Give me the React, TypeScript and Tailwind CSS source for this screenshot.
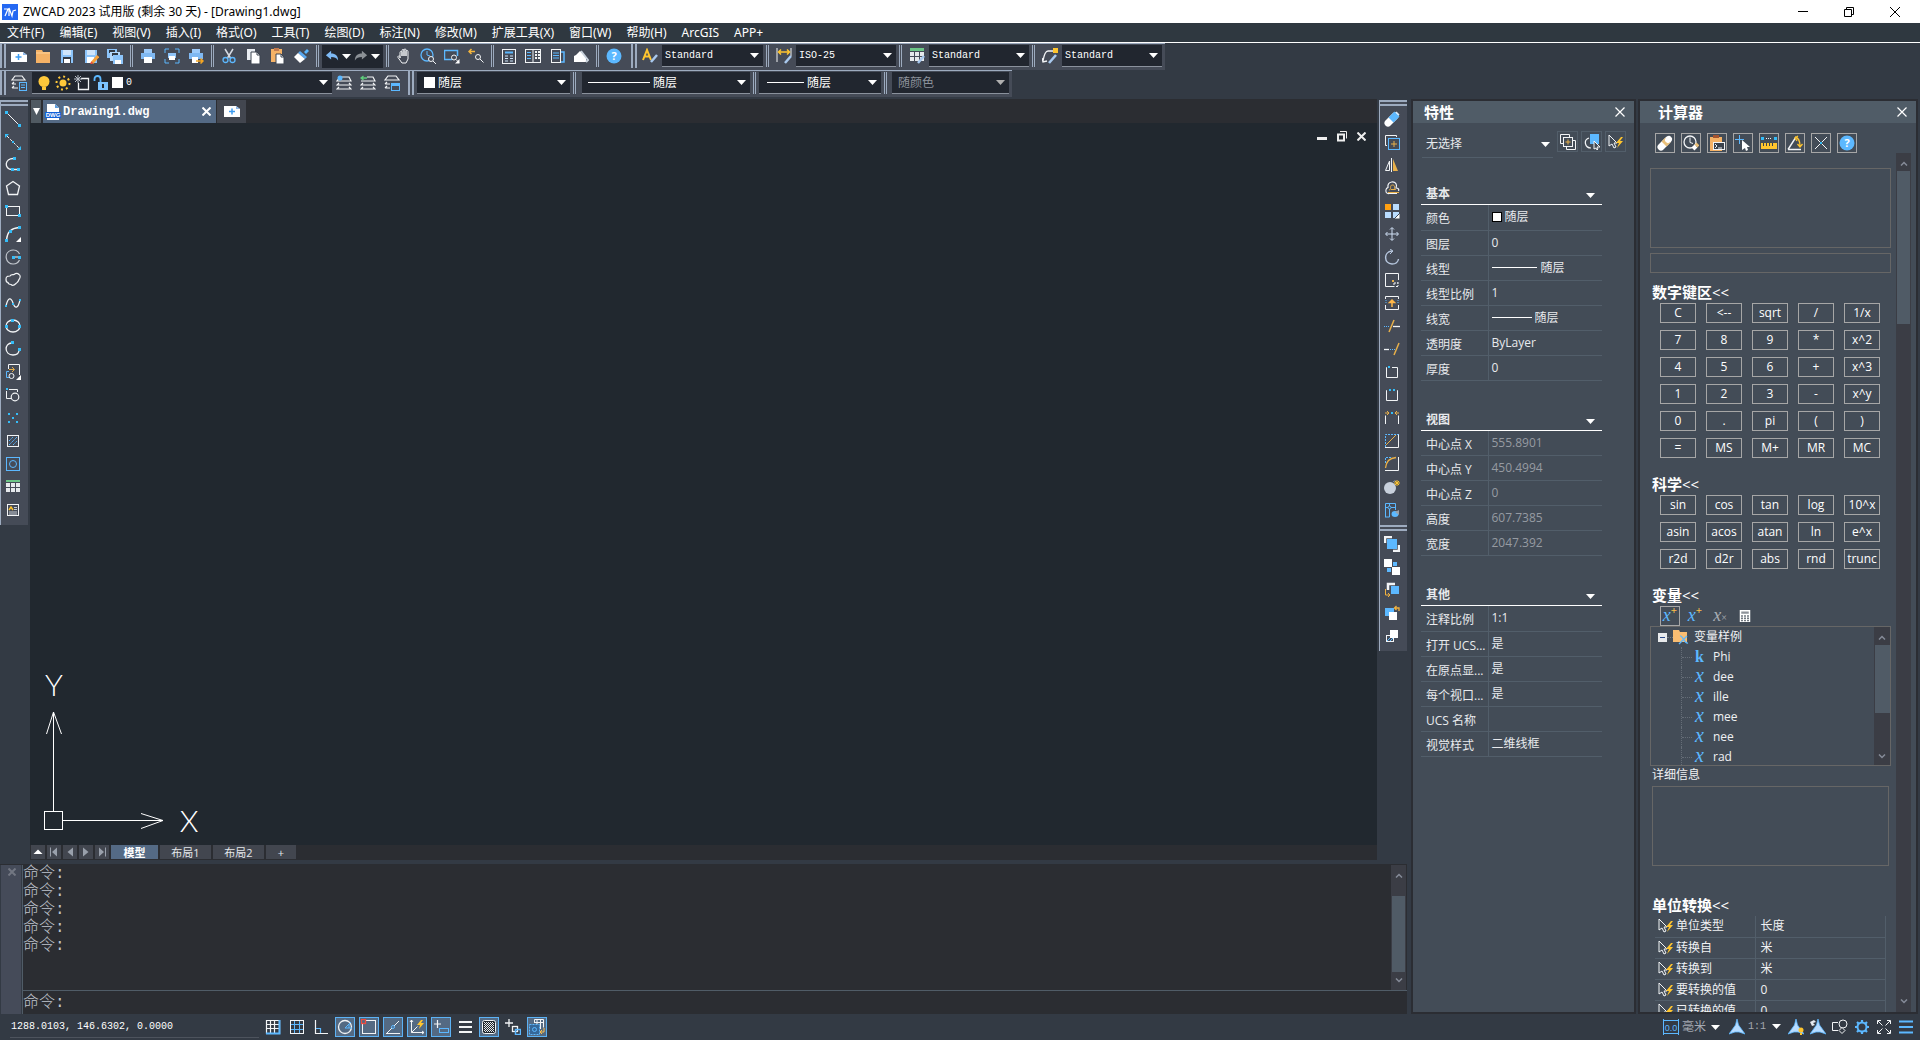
import React from 'react';

const BLUE = '#5cb8ff';
const GOLD = '#e8b04a';

interface IcoProps {
  children: React.ReactNode;
  size?: number;
}

// 16-unit drawing grid shared by every toolbar glyph
const Ico = ({ children, size = 16 }: IcoProps) => (
  <svg width={size} height={size} viewBox="0 0 16 16" fill="none" stroke="#f2f4f6" strokeWidth="1" className="shrink-0" aria-hidden="true">
    {children}
  </svg>
);

// small grip square used on drawing tool glyphs
const Grip = ({ x, y, s = 3 }: { x: number; y: number; s?: number }) => (
  <rect x={x} y={y} width={s} height={s} fill="#35bdf8" stroke="none" />
);

const Box = ({ x, y, w, h, f = '#ffffff' }: { x: number; y: number; w: number; h: number; f?: string }) => (
  <rect x={x} y={y} width={w} height={h} fill={f} stroke="none" />
);

const Caret = ({ color = '#ffffff' }: { color?: string }) => (
  <svg width="9" height="5" viewBox="0 0 9 5" className="shrink-0" aria-hidden="true"><path d="M0 0h9L4.500 5z" fill={color} /></svg>
);

const CloseX = ({ size = 10 }: { size?: number }) => (
  <svg width={size} height={size} viewBox="0 0 10 10" stroke="#ffffff" strokeWidth="1.2" aria-hidden="true"><path d="M0.500 0.500l9 9M9.500 0.500l-9 9" /></svg>
);

const Chevron = ({ down = false }: { down?: boolean }) => (
  <svg width="8" height="5" viewBox="0 0 8 5" fill="none" stroke="#858b98" strokeWidth="1.500" aria-hidden="true">
    <path d={down ? 'M1 0.500l3 3 3-3' : 'M1 4.500l3-3 3 3'} />
  </svg>
);

const helpIcon = (
  <g stroke="none">
    <circle cx="8" cy="8" r="7.5" fill={BLUE} />
    <text x="8" y="12" textAnchor="middle" fontSize="11" fontWeight="700" fill="#fff" fontFamily="Open Sans">?</text>
  </g>
);

const pickIcon = (
  <g>
    <path d="M1 1v11l3-2 2 4 2-1-2-4h3z" />
    <path d="M13 3l-5 6h3l-2 5 6-7h-3l3-4z" fill="#ffc52e" stroke="none" />
  </g>
);

const fileIcons: [string, React.ReactNode][] = [
  ['新建', <><path d="M0 4h12l4 3v7H0z" fill="#fff" stroke="none" /><path d="M12 4l4 3h-4z" fill="#8fb8e8" stroke="none" /><path d="M7.500 6v6M4.500 9h6" stroke="#3c9bf0" strokeWidth="1.500" /></>],
  ['打开', <><path d="M1 2h6l1 2h7v11H1z" fill="#f5b266" stroke="none" /><path d="M1 5h14" stroke="#ffd49c" /></>],
  ['保存', <><path d="M2 2h12v13H2z" fill="#8cc4fa" stroke="none" /><Box x={4} y={2} w={8} h={5} f="#cfe5fb" /><Box x={4} y={9} w={8} h={6} f="#333a45" /><Box x={5} y={11} w={6} h={4} f="#fff" /></>],
  ['另存为', <><path d="M2 2h12v13H2z" fill="#8cc4fa" stroke="none" /><Box x={4} y={2} w={8} h={5} f="#cfe5fb" /><Box x={4} y={9} w={7} h={6} f="#fff" /><path d="M9 15l6-7" stroke="#f7a13a" strokeWidth="3" /><path d="M8 16l1-2" stroke="#e84c3d" strokeWidth="2" /></>],
  ['全部保存', <><Box x={0} y={1} w={10} h={9} f="#8cc4fa" /><Box x={2} y={2} w={6} h={3} f="#333a45" /><Box x={3} y={4} w={10} h={9} f="#b4d8fb" /><Box x={5} y={5} w={6} h={3} f="#333a45" /><Box x={6} y={7} w={10} h={9} f="#8cc4fa" /><Box x={8} y={12} w={6} h={4} f="#fff" /></>],
];

const printIcons: [string, React.ReactNode][] = [
  ['打印', <><Box x={4} y={1} w={8} h={4} f="#9ccafa" /><Box x={1} y={5} w={14} h={6} f="#7fb8f2" /><Box x={4} y={9} w={8} h={6} f="#fff" /></>],
  ['打印预览', <><path d="M1 5V1h4M11 1h4v4M15 11v4h-4M5 15H1v-4" stroke={BLUE} /><Box x={4} y={5} w={8} h={5} f="#8fc4f8" /><Box x={5} y={8} w={6} h={4} f="#fff" /></>],
  ['发布', <><Box x={4} y={1} w={8} h={4} f="#9ccafa" /><Box x={1} y={5} w={14} h={6} f="#7fb8f2" /><Box x={4} y={9} w={6} h={6} f="#fff" /><path d="M8 13h7M12.500 10.500L15 13l-2.500 2.500" stroke="#f5a623" strokeWidth="1.500" /></>],
];

const editIcons: [string, React.ReactNode][] = [
  ['剪切', <><path d="M4 1l5.500 9M12 1L6.500 10" stroke="#d5dbe3" strokeWidth="1.500" /><circle cx="4.500" cy="12" r="2.500" stroke={BLUE} strokeWidth="1.300" /><circle cx="11.500" cy="12" r="2.500" stroke={BLUE} strokeWidth="1.300" /></>],
  ['复制', <><Box x={2} y={1} w={8} h={11} f="#e9edf2" /><path d="M6 4h6l3 3v9H6z" fill="#fff" stroke="#3d4450" /><path d="M12 4v3h3" stroke="#3d4450" /></>],
  ['粘贴', <><Box x={2} y={1} w={11} h={13} f="#f5b266" /><Box x={5} y={0} w={5} h={3} f="#c27b4f" /><path d="M7 6h5l3 3v7H7z" fill="#fff" stroke="#3d4450" /><path d="M12 6v3h3" stroke="#3d4450" /></>],
  ['特性匹配', <><path d="M11 4l3-3 2 2-3 3z" fill={BLUE} stroke="none" /><path d="M7 3l7 6-2 2-7-6z" fill="#5aa8ef" stroke="none" /><path d="M5 5l7 6-5 4-6-6z" fill="#fff" stroke="none" /></>],
];

const viewIcons: [string, React.ReactNode][] = [
  ['平移', <path d="M4 10V4.500a1 1 0 012 0V8V2.500a1 1 0 012 0V8V2a1 1 0 012 0v6V3.500a1 1 0 012 0V11l-2 4H6l-4-5.500a1 1 0 012-1z" />],
  ['实时缩放', <><circle cx="7" cy="7" r="6" stroke={BLUE} strokeWidth="1.300" /><path d="M7 3v4l3 1" stroke={BLUE} /><circle cx="11" cy="11" r="2.500" fill="#454b57" /><path d="M13 13l3 3" /></>],
  ['窗口缩放', <><path d="M13.500 8V2.500h-13v9H8" stroke={BLUE} strokeWidth="1.500" /><circle cx="10" cy="9.500" r="2.500" fill="#454b57" /><path d="M12 11.500l3 3" /><path d="M15.500 11v4.500h-4.500z" fill="#fff" stroke="none" /></>],
  ['上一个', <><path d="M7 3.500H1.500M3.500 1L1 3.500 3.500 6" stroke="#f5b63d" strokeWidth="1.500" /><circle cx="10" cy="9" r="2.500" /><path d="M12 11l3.500 3.500" /></>],
];

const paletteIcons: [string, React.ReactNode][] = [
  ['特性', <><rect x="1.500" y="1.500" width="13" height="14" /><path d="M4 4.500h8" stroke={BLUE} strokeWidth="2" /><path d="M4 8h3M4 10.500h3M4 13h3M9 8h3M9 10.500h3M9 13h3" stroke="#cfe5fb" /></>],
  ['设计中心', <><rect x="0.500" y="1.500" width="15" height="13" /><path d="M8 1v14" /><path d="M2 4.500h4M2 7.500h4M2 10.500h4" stroke={BLUE} /><path d="M10 4h2M13 4h2M10 7h2M13 7h2M10 10h2M13 10h2" strokeWidth="2" /></>],
  ['工具选项板', <><rect x="2.500" y="1.500" width="9" height="13" /><path d="M12 4h3v10h-3" stroke={BLUE} strokeWidth="1.500" /><path d="M4 5h6M4 7.500h6M4 10h6" stroke={BLUE} /></>],
  ['清理', <><path d="M1 8l2-1 4-4 6 6v5H1z" fill="#fff" stroke="none" /><path d="M8 3l7 9-2 2" stroke="#c9d2dc" strokeWidth="2" /></>],
];

const drawIcons: [string, React.ReactNode][] = [
  ['直线', <><path d="M2 2l12 12" /><Grip x={0} y={0} /><Grip x={13} y={13} /></>],
  ['构造线', <><path d="M2 2l12 12" strokeDasharray="3 1.500" /><Grip x={7} y={7} s={2} /><path d="M0 0h4l-4 4zM16 16h-4l4-4z" fill="#35bdf8" stroke="none" /></>],
  ['多段线', <><path d="M9 1.500C-1 1-1 12.500 7 12.500h6" strokeWidth="1.300" /><Grip x={8} y={0} /><Grip x={6} y={11} /><Grip x={12} y={11} /></>],
  ['正多边形', <path d="M8 1.500L14.500 6 12.500 14.500h-9L1.500 6z" strokeWidth="1.300" />],
  ['矩形', <><rect x="1.500" y="3.500" width="13" height="9" /><Grip x={0} y={2} /><Grip x={13} y={11} /></>],
  ['圆弧', <><path d="M1.500 14C2 6 7 2 14 1.500" strokeWidth="1.300" /><Grip x={0} y={13} /><Grip x={4} y={4} /><Grip x={13} y={0} /><path d="M16 11v5h-5z" fill="#fff" stroke="none" /></>],
  ['圆', <><path d="M14.500 5A7 7 0 108 15a7 7 0 006.500-4" stroke="#c3c8cf" strokeWidth="1.200" /><path d="M8 8h6" /><Grip x={7} y={7} /><Grip x={13} y={7} /></>],
  ['修订云线', <path d="M1 7c0-3 3-3 4-3 1-2 3-1 4-1.500 2-1.500 4-1 5 0 2 1 1 4 0 5-1 3-2 3-3 4-2 2-4 2-5 1-2 0-3-1-3-2-2 0-2-2-2-3.500z" strokeWidth="1.200" />],
  ['样条曲线', <><path d="M1 11C3 2 6 2 8 8s5 6 7-3" strokeWidth="1.200" /><Grip x={0} y={10} s={2} /><Grip x={7} y={8} s={2} /><Grip x={14} y={4} s={2} /></>],
  ['椭圆', <><ellipse cx="8" cy="8" rx="7" ry="6" strokeWidth="1.300" /><Grip x={0} y={7} /><Grip x={6} y={1} /><Grip x={13} y={7} /></>],
  ['椭圆弧', <><path d="M7 2C-1 2-1 14 8 14c4 0 6-2 6-5" strokeWidth="1.300" /><Grip x={6} y={0} /><Grip x={13} y={7} /></>],
  ['插入块', <><path d="M3.500 5V0.500h11V11" /><path d="M4 7.500H1.500v6H5" stroke={BLUE} /><path d="M4 5.500h5M7 3l2.500 2.500L7 8" stroke={GOLD} /><circle cx="6.500" cy="12" r="2.500" /><path d="M16 11v5h-5z" fill="#fff" stroke="none" /></>],
  ['创建块', <><path d="M4 2.500h8.500V5M1.500 4v7.500H6" /><circle cx="10" cy="10" r="3.800" strokeWidth="1.200" /><Grip x={1} y={1} s={2} /></>],
  ['点', <><Grip x={3} y={3} s={2} /><Grip x={11} y={3} s={2} /><Grip x={7} y={7} s={2} /><Grip x={3} y={11} s={2} /><Grip x={11} y={11} s={2} /></>],
  ['图案填充', <><rect x="2.500" y="2.500" width="11" height="11" /><path d="M4 8l4-4M4 12l8-8M8 12l4-4" stroke={BLUE} strokeDasharray="1.500 0.500" /></>],
  ['面域', <><rect x="1.500" y="1.500" width="13" height="13" stroke={BLUE} /><circle cx="8" cy="8" r="3.500" stroke={BLUE} /></>],
  ['表格', <><Box x={1} y={1} w={14} h={2} f="#6cc587" />{[4, 9].map(y => [1, 6, 11].map(x => <Box key={`${x}-${y}`} x={x} y={y} w={4} h={4} f="#e6e9ec" />))}</>],
  ['多行文字', <><rect x="2.500" y="2.500" width="11" height="11" /><path d="M4 8l2-3 2 3" stroke="#ffc52e" strokeWidth="1.500" /><path d="M9 5.500h3M9 7.500h3M4 10h8M4 12h8" stroke="#c8ced6" /></>],
];

const modifyIcons: [string, React.ReactNode][] = [
  ['删除', <><path d="M4 12l7-7" stroke="#fff" strokeWidth="7" strokeLinecap="round" /><path d="M7 9l6-6" stroke={BLUE} strokeWidth="7" /><path d="M12 1l3 3" stroke="#d8e9f9" strokeWidth="1.500" /></>],
  ['复制', <><path d="M3 11.500H1.500v-10h11V3" /><rect x="4.500" y="4.500" width="11" height="11" stroke={BLUE} /><path d="M10 7v6M7 10h6" stroke={GOLD} /></>],
  ['镜像', <><path d="M7.500 1v14" /><path d="M5.500 4v9.500H1.500z" /><path d="M9 2v12h5z" fill={GOLD} stroke="none" /></>],
  ['偏移', <><path d="M13 13.500H5C2 14 1 11 2.500 8.500L4 7.500C3 1 12 0 12.500 5.500L12 8c3 0 3 2 2.500 3" strokeWidth="1.200" /><path d="M4 12.500h11M5 10c3 0 0-5 3.500-5s1 4 3 4.500H7" stroke={GOLD} /></>],
  ['阵列', <><Box x={1} y={1} w={6} h={6} f="#ffa012" /><Box x={9} y={1} w={6} h={6} f="#b9dcff" /><Box x={1} y={9} w={6} h={6} f="#b9dcff" /><Box x={9} y={9} w={6} h={6} f="#b9dcff" /><path d="M16 10v6h-6z" fill="#fff" stroke="#434a56" /></>],
  ['移动', <path d="M8 2v12M2 8h12M6 3.500l2-2 2 2M6 12.500l2 2 2-2M3.500 6l-2 2 2 2M12.500 6l2 2-2 2" stroke="#d0e0f5" />],
  ['旋转', <><path d="M8 2C-1 3 0 15 8 15c4 0 6-2 6.500-5" stroke="#b7c7de" strokeWidth="1.400" /><path d="M6 0l3 2-3 3" stroke="#b7c7de" /></>],
  ['缩放', <><path d="M10 14.500H1.500v-13h13V8" /><path d="M10 11h4M10 11v4M14 14.500h-2M14 10v4" strokeDasharray="2 1" /><Box x={8} y={8} w={2} h={2} f={GOLD} /></>],
  ['拉伸', <><path d="M5 1.500H1.500V4M5 1.500h9.500V4M1.500 10v4.500h13V10" /><path d="M2 5v4M14 5v4" stroke={BLUE} strokeDasharray="1 1" /><path d="M8 12V5M5.500 7.500L8 5l2.500 2.500z" stroke="#ffb84a" fill="#ffb84a" strokeWidth="1.500" /></>],
  ['修剪', <><path d="M0 8.500h6" stroke={BLUE} strokeDasharray="1 1" /><path d="M9 8.500h7" strokeWidth="1.300" /><path d="M5 14l5-12" stroke={GOLD} strokeWidth="1.500" /></>],
  ['延伸', <><path d="M0 8.500h5" strokeWidth="1.300" /><path d="M6 8.500h5" stroke={BLUE} strokeDasharray="1 1" /><path d="M10 14l5-12" stroke={GOLD} strokeWidth="1.500" /></>],
  ['打断于点', <><path d="M3 3.500H2.500v10h11v-10H8" /><Grip x={4} y={2} s={2} /></>],
  ['打断', <><path d="M3 3.500H2.500v10h11v-10H13" /><Grip x={5} y={2} s={2} /><Grip x={9} y={2} s={2} /></>],
  ['合并', <><path d="M1.500 14V5.500M14.500 14V5.500" /><path d="M1 3h4M3 1l2 2-2 2M15 3h-4M13 1l-2 2 2 2" stroke={GOLD} /><Grip x={7} y={2} s={2} /></>],
  ['倒角', <><path d="M14.500 1v13.500H1" /><path d="M1.500 14V1.500h13" stroke={BLUE} strokeDasharray="2 1" /><path d="M2 12L12 2" stroke={GOLD} /></>],
  ['圆角', <><path d="M14.500 1v13.500H1" /><path d="M1.500 7V1.500H7" stroke={BLUE} strokeDasharray="2 1" /><path d="M1.500 12C2 6 6 2 12 1.500" stroke={GOLD} strokeWidth="1.300" /></>],
  ['分解', <><circle cx="6" cy="9" r="6" fill="#c8d0dc" stroke="none" /><path d="M9 3c2-2 3-1 4 1" stroke="#9aa3b0" /><path d="M13 1v6M10 4h6M11 2l4 4M15 2l-4 4" stroke="#ffc52e" /></>],
  ['编辑块', <><path d="M1.500 15V1.500h10V8M1 5.500h11M5.500 1v14H1" stroke={BLUE} /><circle cx="5.500" cy="5.500" r="1.500" stroke={BLUE} fill="#454b57" /><ellipse cx="11" cy="12" rx="3.500" ry="3" fill={BLUE} stroke="none" /><path d="M11 10l4-2v5z" fill="#9aa0a8" stroke="none" /></>],
];

const orderIcons: [string, React.ReactNode][] = [
  ['前置', <><path d="M1 7V1h7M15 9v6H9" strokeWidth="2.500" /><Box x={3} y={3} w={10} h={10} f={BLUE} /></>],
  ['后置', <><Box x={0} y={0} w={8} h={8} /><Box x={8} y={8} w={8} h={8} /><Box x={9} y={3} w={4} h={4} f={BLUE} /><Box x={3} y={9} w={4} h={4} f={BLUE} /></>],
  ['置于对象之上', <><path d="M4 8V2h7" strokeWidth="2.500" /><Box x={7} y={4} w={8} h={8} f={BLUE} /><path d="M1.500 7v6h4M4 11l2 2-2 2" stroke="#f0b13f" /></>],
  ['置于对象之下', <><Box x={1} y={3} w={9} h={8} f={BLUE} /><Box x={5} y={7} w={8} h={8} /><path d="M15 6V3h-4M12.500 1l-2 2 2 2" stroke="#f0b13f" strokeWidth="1.300" /></>],
  ['图案填充后置', <><rect x="2.500" y="7.500" width="7" height="6" /><path d="M3 13l5-5M6 13l3-3" stroke={BLUE} /><Box x={6} y={2} w={8} h={8} /></>],
];

const calcTools: [string, React.ReactNode][] = [
  ['清除', <><path d="M4 12l7-7" stroke="#fff" strokeWidth="7" strokeLinecap="round" /><path d="M7 9l4-4" stroke="#eac07a" strokeWidth="7" /><path d="M11 5l1-1" stroke="#fff" strokeWidth="6" strokeLinecap="round" /></>],
  ['清除历史', <><circle cx="7" cy="7" r="6" strokeWidth="1.300" /><path d="M7 2.500v5l3 1" /><path d="M10 14l3-3" stroke="#fff" strokeWidth="4" /><path d="M13 11l2-2" stroke="#eac07a" strokeWidth="4" /></>],
  ['粘贴到命令行', <><Box x={1} y={2} w={12} h={14} f="#f5b266" /><Box x={4} y={0} w={6} h={3} f="#a5542f" /><rect x="4.500" y="7.500" width="11" height="7" fill="#3a424d" /><path d="M6 9l2 2-2 2M9 13h4" /></>],
  ['获取坐标', <><path d="M4.500 0v9M0 4.500h9" stroke={BLUE} /><path d="M7 5l8 7-3 0 1 3-2 1-1-3-3 2z" fill="#fff" stroke="none" /></>],
  ['两点距离', <><Grip x={0} y={2} /><Grip x={13} y={2} /><path d="M5 3.500h6" strokeDasharray="1 1" /><Box x={0} y={8} w={16} h={6} f="#ffc52e" /><path d="M2.500 8v3M5.500 8v3M8.500 8v3M11.500 8v3" stroke="#3a424d" /></>],
  ['角度', <><path d="M1 14.500L9 2M1 14.500h13" strokeWidth="1.400" /><path d="M8 2c4 1 5 4 5 9M10.500 9l2.500 3 2.500-3M11 1L8 3l2 3" stroke="#ffc52e" strokeWidth="1.300" /></>],
  ['交点', <><path d="M2 2l12 12M14 2L2 14" /><Grip x={7} y={7} s={2} /></>],
  ['帮助', helpIcon],
];

const scaleMark = <path d="M8 0l1.500 6L16 15l-6-2H6l-6 2 6.500-9z" fill="#b8dcff" stroke={BLUE} strokeWidth="0.800" />;

const statusTools: [string, boolean, React.ReactNode][] = [
  ['捕捉', false, <><path d="M1.500 1.500h13v13h-13zM1 5.500h13M1 9.500h13M5.500 1v13M9.500 1v13" strokeWidth="1.200" /><path d="M14.500 1v13.500H1" stroke={BLUE} strokeWidth="2" /></>],
  ['栅格', false, <><path d="M1 5.500h14M1 10.500h14M5.500 1v14M10.500 1v14" stroke={BLUE} /><rect x="1.500" y="1.500" width="13" height="13" /></>],
  ['正交', false, <><path d="M2.500 1v13.500H15" strokeWidth="1.200" /><path d="M3 9.500h4.500V14" stroke={BLUE} strokeWidth="1.200" /></>],
  ['极轴', true, <><circle cx="8" cy="8" r="6.500" strokeWidth="1.300" /><path d="M8 9l6-6M8 9h7M12 5v4" stroke={BLUE} /></>],
  ['对象捕捉', true, <><rect x="1.500" y="1.500" width="13" height="13" /><rect x="0.500" y="0.500" width="4" height="4" stroke="#f04a3e" strokeWidth="1.300" fill="#546a83" /></>],
  ['对象追踪', true, <><path d="M1 14.500h14M2 14L14 2" /><circle cx="8" cy="8" r="1.500" stroke={BLUE} fill="#546a83" /></>],
  ['动态 UCS', true, <><path d="M2.500 1v12.500H15M2.500 13.500l6-6M1 3l1.500-2L4 3M13 12l2 1.500-2 1.500" /><path d="M12 1L8 6h3l-1 4 5-6h-3l2-3z" fill="#ffc52e" stroke="none" /></>],
  ['动态输入', true, <><path d="M4.500 1v8M1 5h7" strokeWidth="1.200" /><rect x="6.500" y="9.500" width="9" height="4" stroke={BLUE} /></>],
  ['线宽', false, <path d="M2 3h13M2 8h13M2 13h13" strokeWidth="2.200" />],
  ['透明度', true, <><rect x="1.500" y="1.500" width="13" height="13" rx="2" fill="#22282f" />{[3, 5, 7, 9, 11].map(y => <path key={y} d={`M3 ${y + 0.5}h10M4 ${y + 1.5}h9`} strokeDasharray="1 1" stroke="#e8eaec" />)}</>],
  ['选择循环', false, <><path d="M4 0v8M0 4h8" strokeWidth="1.300" /><rect x="7.500" y="7.500" width="5" height="5" strokeWidth="1.300" /><rect x="10.500" y="10.500" width="5" height="5" stroke={BLUE} strokeWidth="1.500" /></>],
  ['快捷特性', true, <><path d="M5.500 4V0.500h9v8M8 1v4M11.500 1v9M5 3.500h10" /><rect x="0.500" y="5.500" width="10" height="10" stroke={BLUE} strokeDasharray="2 1" fill="#36689a" /><circle cx="5.500" cy="10.500" r="2" stroke={BLUE} /><path d="M15 9v4h-4M13 11l-2 2 2 2" stroke="#ffc04a" /></>],
];

const statusRight: [string, React.ReactNode][] = [
  ['注释可见性', <>{scaleMark}<circle cx="13" cy="11" r="2.500" fill="#ffc52e" stroke="none" /><Box x={12} y={14} w={2} h={2} f="#ffc52e" /></>],
  ['自动缩放', <>{scaleMark}<path d="M0 3l4-2 2 2-3 1 2 2-3 1z" fill="#e6ebf0" stroke="none" /></>],
  ['隔离对象', <><path d="M6 3.500H0.500v8H6" /><circle cx="11" cy="5" r="4" /><path d="M10 8.500l3 3-3 3-3-3z" fill="#333a44" /></>],
  ['设置', <><circle cx="8" cy="8" r="4.500" stroke={BLUE} strokeWidth="2" /><path d="M8 1v2.500M8 12.500V15M1 8h2.500M12.500 8H15M3 3l2 2M11 11l2 2M13 3l-2 2M5 11l-2 2" stroke={BLUE} strokeWidth="2.200" /></>],
  ['全屏', <path d="M1.500 5V1.500H5M11 1.500h3.500V5M14.500 11v3.500H11M5 14.500H1.500V11M2 2l4.500 4.500M14 2L9.500 6.500M14 14L9.500 9.500M2 14l4.500-4.500" />],
  ['自定义', <path d="M1 2.500h14M1 8h14M1 13.500h14" stroke={BLUE} strokeWidth="2" />],
];

const menus = ['文件(F)', '编辑(E)', '视图(V)', '插入(I)', '格式(O)', '工具(T)', '绘图(D)', '标注(N)', '修改(M)', '扩展工具(X)', '窗口(W)', '帮助(H)', 'ArcGIS', 'APP+'];

const numberKeys = ['C', '<--', 'sqrt', '/', '1/x', '7', '8', '9', '*', 'x^2', '4', '5', '6', '+', 'x^3', '1', '2', '3', '-', 'x^y', '0', '.', 'pi', '(', ')', '=', 'MS', 'M+', 'MR', 'MC'];
const scienceKeys = ['sin', 'cos', 'tan', 'log', '10^x', 'asin', 'acos', 'atan', 'ln', 'e^x', 'r2d', 'd2r', 'abs', 'rnd', 'trunc'];

interface Section {
  title: string;
  muted?: boolean;
  rows: [string, React.ReactNode][];
}

const sections: Section[] = [
  {
    title: '基本',
    rows: [
      ['颜色', <span className="flex items-center gap-[3px]"><span className="h-[10px] w-[10px] border border-black bg-white" />随层</span>],
      ['图层', '0'],
      ['线型', <span className="flex items-center gap-1"><span className="h-px w-[45px] bg-white" />随层</span>],
      ['线型比例', '1'],
      ['线宽', <span className="flex items-center gap-[3px]"><span className="h-px w-[40px] bg-white" />随层</span>],
      ['透明度', 'ByLayer'],
      ['厚度', '0'],
    ],
  },
  {
    title: '视图',
    muted: true,
    rows: [['中心点 X', '555.8901'], ['中心点 Y', '450.4994'], ['中心点 Z', '0'], ['高度', '607.7385'], ['宽度', '2047.392']],
  },
  {
    title: '其他',
    rows: [['注释比例', '1:1'], ['打开 UCS...', '是'], ['在原点显...', '是'], ['每个视口...', '是'], ['UCS 名称', ''], ['视觉样式', '二维线框']],
  },
];

const units = [['单位类型', '长度'], ['转换自', '米'], ['转换到', '米'], ['要转换的值', '0'], ['已转换的值', '0']];

const ToolGroup = ({ items }: { items: [string, React.ReactNode][] }) => (
  <>
    {items.map(([name, glyph]) => (
      <button key={name} aria-label={name} className="flex h-6 w-6 items-center justify-center">
        <Ico>{glyph}</Ico>
      </button>
    ))}
  </>
);

const Divider = () => <span className="mx-[3px] h-[22px] w-[3px] shrink-0 border-x border-[#9dabbf]" />;

const Handle = () => <span className="mr-px h-full w-[6px] shrink-0 border-x-2 border-[#9dabbf]" />;

const Strip = ({ children, className = '' }: { children: React.ReactNode; className?: string }) => (
  <div className={`flex h-[27px] items-center border-t border-[#9dabbf] bg-[#454b57] pb-0.5 ${className}`}>
    <Handle />
    {children}
  </div>
);

interface ComboProps {
  label: string;
  value: string;
  className: string;
  lead?: React.ReactNode;
  mono?: boolean;
  muted?: boolean;
}

const Combo = ({ label, value, className, lead, mono, muted }: ComboProps) => (
  <label className={`flex h-[22px] shrink-0 items-center border-b border-[#8a919c] bg-[#21262f] pr-1 ${className}`}>
    {lead}
    <select aria-label={label} disabled={muted} className={`min-w-0 flex-1 appearance-none bg-transparent pl-[3px] outline-none ${mono ? "font-['Liberation_Mono',monospace] text-[10px]" : 'text-xs'} ${muted ? 'text-[#8d929b]' : 'text-white'}`}>
      <option>{value}</option>
    </select>
    <Caret color={muted ? '#b0b0b0' : '#ffffff'} />
  </label>
);

const SideBar = ({ items, className = '' }: { items: [string, React.ReactNode][]; className?: string }) => (
  <div className={`flex w-7 flex-col border-l border-[#9dabbf] bg-[#454b57] pb-1 ${className}`}>
    <div className="mb-px h-[6px] w-full border-y-2 border-[#9dabbf]" />
    {items.map(([name, glyph]) => (
      <button key={name} aria-label={name} className="flex h-[23px] w-6 items-center justify-center">
        <Ico>{glyph}</Ico>
      </button>
    ))}
  </div>
);

const PanelHeader = ({ title, className }: { title: string; className: string }) => (
  <header className={`flex h-[22px] shrink-0 items-center justify-between bg-[#505c67] ${className}`}>
    <h2 className="text-[15px] font-bold leading-5 text-white">{title}</h2>
    <button aria-label="关闭"><CloseX /></button>
  </header>
);

const KeyPad = ({ title, keys }: { title: string; keys: string[] }) => (
  <section>
    <h3 className="h-5 pl-0.5 text-[15px] font-bold leading-[18px] text-white">{title}<span className="font-normal">&lt;&lt;</span></h3>
    <div className="grid w-[220px] grid-cols-5 gap-x-[10px] gap-y-[7px] ml-[10px]">
      {keys.map(k => (
        <button key={k} className="h-5 w-9 whitespace-nowrap border border-[#a6a6a6] text-xs leading-[18px] text-white">{k}</button>
      ))}
    </div>
  </section>
);

const TitleBar = () => (
  <div className="flex h-[23px] shrink-0 items-center bg-white pl-[2px] pr-5 font-['Noto_Sans','Noto_Sans_CJK_SC',sans-serif] text-xs text-black">
    <svg width="16" height="16" viewBox="0 0 16 16" aria-hidden="true">
      <rect width="16" height="16" fill="#2468f2" />
      <path d="M2 5h4L3 12M7 12V4l3 8 1-5 3-1" fill="none" stroke="#fff" strokeWidth="1.200" />
    </svg>
    <h1 className="ml-[5px] flex-1">ZWCAD 2023 试用版 (剩余 30 天) - [Drawing1.dwg]</h1>
    <div className="flex items-center gap-9">
      <button aria-label="最小化" className="h-px w-[10px] bg-black" />
      <button aria-label="还原">
        <svg width="10" height="10" viewBox="0 0 10 10" fill="none" stroke="#000"><path d="M0.500 2.500h7v7h-7zM2.500 2V0.500h7v7H8" /></svg>
      </button>
      <button aria-label="关闭">
        <svg width="10" height="10" viewBox="0 0 10 10" stroke="#000"><path d="M0 0l10 10M10 0L0 10" /></svg>
      </button>
    </div>
  </div>
);

const Toolbars = () => (
  <div className="h-14 shrink-0">
    <div className="flex">
      <Strip className="pr-[5px]">
        <ToolGroup items={fileIcons} />
        <Divider />
        <ToolGroup items={printIcons} />
        <Divider />
        <ToolGroup items={editIcons} />
        <Divider />
        <div className="flex h-[23px] w-[61px] items-center justify-between bg-[#21262f] px-[3px]">
          <button aria-label="放弃"><Ico size={14}><path d="M7 2L1 7l6 5V9c4 0 6 1 8 4 0-5-3-8-8-8z" fill="#7db9f5" stroke="none" /></Ico></button>
          <Caret />
          <button aria-label="重做"><Ico size={14}><path d="M9 2l6 5-6 5V9c-4 0-6 1-8 4 0-5 3-8 8-8z" fill="#8b9096" stroke="none" /></Ico></button>
          <Caret />
        </div>
        <Divider />
        <ToolGroup items={viewIcons} />
        <Divider />
        <ToolGroup items={paletteIcons} />
        <Divider />
        <ToolGroup items={[['帮助', helpIcon]]} />
      </Strip>
      <Strip className="pr-[3px]">
        <ToolGroup items={[['文字样式', <><path d="M1 12L5 2l4 10M2.500 8.500h5" stroke="#ffc52e" strokeWidth="2" /><path d="M9 14l6-7" stroke="#a9c9ee" strokeWidth="2.500" /></>]]} />
        <Combo label="文字样式" value="Standard" mono className="w-[101px]" />
        <Divider />
        <ToolGroup items={[['标注样式', <><path d="M1 0v14M15 0v8" /><path d="M3 4h10M5 1.500L2.500 4 5 6.500M11 1.500L13.500 4 11 6.500" stroke="#ffc52e" strokeWidth="1.500" /><path d="M9 15l6-7" stroke="#a9c9ee" strokeWidth="2.500" /></>]]} />
        <Combo label="标注样式" value="ISO-25" mono className="w-[100px]" />
        <Divider />
        <ToolGroup items={[['表格样式', <><Box x={1} y={0} w={14} h={3} f="#6cc587" />{[4, 9].map(y => [1, 6, 11].map(x => <Box key={`${x}-${y}`} x={x} y={y} w={4} h={4} f="#e6e9ec" />))}<path d="M9 15l6-7" stroke="#a9c9ee" strokeWidth="2.500" /></>]]} />
        <Combo label="表格样式" value="Standard" mono className="w-[100px]" />
        <Divider />
        <ToolGroup items={[['多重引线样式', <><path d="M1 13C2 7 3 3 6 3h5M0 10l1 4 4-1" strokeWidth="1.300" /><Box x={11} y={0} w={5} h={5} f="#ffc52e" /><path d="M7 15l7-8" stroke="#a9c9ee" strokeWidth="2.500" /></>]]} />
        <Combo label="多重引线样式" value="Standard" mono className="w-[100px]" />
      </Strip>
    </div>
    <div className="flex">
      <Strip className="pr-1">
        <ToolGroup items={[['图层特性管理器', <><path d="M4 1h7l3 4H1zM1 9h4M1 13h6M1 9l2-2M1 13l2-2" strokeWidth="1.200" /><rect x="8.500" y="7.500" width="7" height="8" stroke={BLUE} /><path d="M10 10h4M10 12.500h4" stroke={BLUE} /></>]]} />
        <Combo
          label="图层"
          value="0"
          mono
          className="ml-px w-[300px] pl-1"
          lead={
            <span className="flex items-center gap-[3px]">
              <Ico><circle cx="8" cy="6.500" r="5.500" fill="#ffc83a" stroke="none" /><Box x={6} y={12} w={4} h={3} f="#ffc83a" /></Ico>
              <Ico><circle cx="8" cy="8" r="3.500" fill="#ffc83a" stroke="none" /><circle cx="8" cy="8" r="6.500" stroke="#ffc83a" strokeWidth="2" strokeDasharray="2 3" /></Ico>
              <Ico><path d="M7 3.500h7.500v11h-10V8" strokeWidth="1.300" /><path d="M4 0v8M0 4h8M1 1l6 6M7 1L1 7" stroke="#b8bec8" /></Ico>
              <Ico><path d="M1.500 6V4c0-4 6-4 6 0v4" stroke={BLUE} strokeWidth="1.800" /><Box x={5} y={7} w={10} h={8} f="#7cc3ff" /><Box x={9} y={9} w={2} h={4} f="#21262f" /></Ico>
              <span className="h-[11px] w-[11px] bg-white" />
            </span>
          }
        />
        <ToolGroup items={[
          ['图层置为当前', <><path d="M4 2h9l2 4H1zM3 8l-2 2h14l-2-2M3 12l-2 2h14l-2-2" strokeWidth="1.200" /><circle cx="4" cy="3" r="2.500" fill={BLUE} stroke="none" /></>],
          ['上一个图层', <><path d="M7 2h6l2 4H1M3 8l-2 2h14l-2-2M3 12l-2 2h14l-2-2" strokeWidth="1.200" /><path d="M1 3h6M3.500 1L1 3l2.500 2" stroke="#5fce7c" strokeWidth="1.300" /></>],
          ['图层状态', <><path d="M4 1h8l3 4H1zM1 9h5M1 13h5M1 9l2-2M1 13l2-2" strokeWidth="1.200" /><rect x="7.500" y="8.500" width="8" height="7" stroke={BLUE} /><path d="M8 10h7" stroke={BLUE} strokeWidth="2" /></>],
        ]} />
      </Strip>
      <Strip className="pr-[3px]">
        <Combo label="颜色" value="随层" className="ml-0.5 w-[153px] pl-[7px]" lead={<span className="h-[11px] w-[11px] bg-white" />} />
        <Divider />
        <Combo label="线型" value="随层" className="ml-[3px] w-[168px] pl-[6px]" lead={<span className="h-px w-[62px] bg-white" />} />
        <Divider />
        <Combo label="线宽" value="随层" className="w-[122px] pl-2" lead={<span className="h-px w-[37px] bg-white" />} />
        <Divider />
        <Combo label="打印样式" value="随颜色" muted className="ml-0.5 w-[117px] pl-[3px]" />
      </Strip>
    </div>
  </div>
);

const NavButton = ({ label, d, color = '#99a0ab' }: { label: string; d: string; color?: string }) => (
  <button aria-label={label} className="flex h-[14px] w-[14px] items-center justify-center bg-[#42464f]">
    <svg width="10" height="10" viewBox="0 0 10 10" fill={color} aria-hidden="true"><path d={d} /></svg>
  </button>
);

const DrawingArea = () => (
  <div className="flex min-w-0 flex-1 flex-col">
    <div className="flex h-6 shrink-0 items-end bg-[#2b2d32] pl-px">
      <button aria-label="文档列表" className="mr-0.5 flex h-[23px] w-[10px] items-center justify-center bg-[#505a62]">
        <svg width="7" height="7" viewBox="0 0 7 7"><path d="M0 0h7L3.500 7z" fill="#fff" /></svg>
      </button>
      <div className="mr-px flex h-[23px] w-[173px] items-center bg-[#546a85] pl-[2px] pr-[5px]">
        <svg width="16" height="16" viewBox="0 0 16 16" aria-hidden="true">
          <path d="M2 0h8l4 4v12H2z" fill="#fff" />
          <path d="M10 0l4 4h-4z" fill="#5a9de0" />
          <rect y="8" width="16" height="6" fill="#1060d8" />
          <text x="8" y="13" textAnchor="middle" fontSize="6" fontWeight="700" fill="#fff" fontFamily="Liberation Sans">DWG</text>
        </svg>
        <span className="ml-[2px] flex-1 font-['Liberation_Mono',monospace] text-xs font-bold text-white">Drawing1.dwg</span>
        <button aria-label="关闭文档"><svg width="9" height="9" viewBox="0 0 9 9" stroke="#fff" strokeWidth="2"><path d="M0.500 0.500l8 8M8.500 0.500l-8 8" /></svg></button>
      </div>
      <button aria-label="新建文档" className="flex h-[23px] w-[29px] items-center justify-center bg-[#42464f]">
        <Ico><path d="M0 2h12l4 3v8H0z" fill="#fff" stroke="none" /><path d="M12 2l4 3h-4z" fill="#8fb8e8" stroke="none" /><path d="M8 4.500v6M5 7.500h6" stroke="#3c9bf0" strokeWidth="1.500" /></Ico>
      </button>
    </div>

    <div className="flex flex-1 flex-col justify-between bg-[#21282f]">
      <div className="flex items-center justify-end gap-[10px] pr-[11px] pt-2">
        <button aria-label="最小化窗口" className="mt-1 h-[3px] w-[10px] bg-[#eeeeee]" />
        <button aria-label="还原窗口"><svg width="10" height="11" viewBox="0 0 10 11" fill="none" stroke="#eee"><path d="M1 3.500h6v6H1z" strokeWidth="2" /><path d="M3 0.500h6.500v7" /></svg></button>
        <button aria-label="关闭窗口"><svg width="9" height="9" viewBox="0 0 9 9" stroke="#eee" strokeWidth="2"><path d="M0.500 0.500l8 8M8.500 0.500l-8 8" /></svg></button>
      </div>
      {/* UCS icon */}
      <svg width="180" height="180" viewBox="0 0 180 180" fill="none" stroke="#ffffff" className="shrink-0" aria-label="UCS">
        <rect x="14.500" y="146.500" width="18" height="18" />
        <path d="M23.500 146V47M16.500 69L23.500 47l8 22" />
        <path d="M33 155.500h100M111 148.500l22 7-22 8" />
        <g stroke="none" fill="#ffffff" fontFamily="Lato" fontWeight="300" fontSize="30" textAnchor="middle">
          <text x="24" y="31">Y</text>
          <text x="159" y="167">X</text>
        </g>
      </svg>
    </div>

    <div className="flex h-[15px] shrink-0 items-start gap-0.5 bg-[#2b2d32] pl-px text-[11px] leading-[13px] text-[#e4e6ea]">
      <NavButton label="展开" d="M0.500 7L5 2.500 9.500 7z" color="#ffffff" />
      <NavButton label="第一个布局" d="M1 0.500h1v9H1zM8 0.500v9L3 5z" />
      <NavButton label="上一个布局" d="M8 0.500v9L2.500 5z" />
      <NavButton label="下一个布局" d="M2 0.500v9L7.500 5z" />
      <NavButton label="最后一个布局" d="M8 0.500h1v9H8zM2 0.500v9L7 5z" />
      <button className="h-[14px] w-[47px] bg-[#546a85] font-bold text-white">模型</button>
      <button className="h-[14px] w-[51px] bg-[#42464f]">布局1</button>
      <button className="h-[14px] w-[51px] bg-[#42464f]">布局2</button>
      <button className="h-[14px] w-[30px] bg-[#42464f]">+</button>
    </div>
  </div>
);

const CommandWindow = () => (
  <div className="flex h-[150px] shrink-0 border-t border-[#2b2d32] pl-px">
    <div className="w-5 bg-[#454b59] pl-[7px] pt-[3px]">
      <button aria-label="关闭命令行" className="block"><svg width="8" height="8" viewBox="0 0 8 8" stroke="#727782" strokeWidth="2"><path d="M0.500 0.500l7 7M7.500 0.500l-7 7" /></svg></button>
    </div>
    <div className="ml-px flex min-w-0 flex-1 flex-col border-l border-[#505c67] bg-[#2b2d32] font-['Liberation_Mono','Noto_Sans_CJK_SC',monospace] text-base font-light text-[#c0c5ce]">
      <div className="flex flex-1 border-b border-[#505c67]">
        <div className="flex-1">
          {[0, 1, 2, 3, 4].map(n => <p key={n} className="h-[18px] leading-[18px]">命令:</p>)}
        </div>
        <div className="mr-px flex w-[15px] flex-col items-center bg-[#3b3d45] pb-[7px] pt-2">
          <Chevron />
          <div className="mb-[6px] mt-[18px] w-[13px] flex-1 bg-[#505b66]" />
          <Chevron down />
        </div>
      </div>
      <label className="flex h-[23px] items-center">
        命令:
        <input aria-label="命令" className="ml-1 flex-1 bg-transparent outline-none" />
      </label>
    </div>
  </div>
);

const PropertiesPanel = () => (
  <aside className="flex w-[225px] shrink-0 flex-col border-2 border-[#2b2d33] bg-[#434c57]">
    <PanelHeader title="特性" className="pl-[11px] pr-[9px]" />
    <div className="flex h-8 items-start gap-[3px] pl-[9px] pt-2">
      <label className="mr-px flex h-[27px] w-[131px] shrink-0 items-center border-b border-[#525e6a] pr-[3px]">
        <select aria-label="选择对象" className="min-w-0 flex-1 appearance-none bg-transparent pl-1 text-xs text-[#e8eaed] outline-none"><option>无选择</option></select>
        <Caret />
      </label>
      {[
        ['快速选择', <><path d="M3 9.500H0.500v-9h9V3M13 6.500h2.500v9h-9V13" /><rect x="3.500" y="3.500" width="9" height="9" /><path d="M8 5.500v5M5.500 8h5" stroke={GOLD} /></>],
        ['选择对象', <><Box x={6} y={0} w={9} h={10} f={BLUE} /><path d="M5 4C-1 6 1 14 7 14" strokeWidth="1.200" /><path d="M10 7v8l2-1 1 2 1-1-1-2h3z" fill="#434c57" /></>],
        ['切换 PICKADD', pickIcon],
      ].map(([name, glyph]) => (
        <button key={name as string} aria-label={name as string} className="flex h-[21px] w-[21px] items-center justify-center border border-[#525e6a]">
          <Ico>{glyph}</Ico>
        </button>
      ))}
    </div>
    {sections.map(s => (
      <section key={s.title} className="ml-2 w-[181px] text-xs text-[#e8eaed]">
        <h3 className="flex h-[50px] items-end justify-between border-b border-white pb-0.5 pl-[5px] pr-[7px] font-bold leading-4">
          {s.title}
          <span className="pb-1"><Caret /></span>
        </h3>
        <table className="w-full table-fixed border-collapse">
          <tbody>
            {s.rows.map(([label, value]) => (
              <tr key={label} className="h-[25px] border-b border-[#525e6a]">
                <th scope="row" className="w-[67px] whitespace-nowrap border-r border-[#525e6a] p-0 pl-[5px] pt-1 text-left font-normal leading-4">{label}</th>
                <td className={`p-0 pl-[3px] leading-4 ${s.muted ? 'text-[#969ba2]' : ''}`}>{value}</td>
              </tr>
            ))}
          </tbody>
        </table>
      </section>
    ))}
  </aside>
);

const TreeGlyph = ({ ch }: { ch: string }) => (
  <span className={`w-[18px] font-['Liberation_Serif',serif] leading-4 text-[#5cb8ff] ${ch === 'k' ? 'text-base font-bold' : 'pb-1 text-xl italic'}`}>{ch}</span>
);

const CalculatorPanel = () => (
  <aside className="ml-0.5 mr-0.5 flex w-[280px] shrink-0 flex-col border-2 border-[#2b2d33] bg-[#434c57]">
    <PanelHeader title="计算器" className="pl-[18px] pr-[9px]" />
    <div className="flex h-[30px] shrink-0 items-end gap-[6px] pl-[15px]">
      {calcTools.map(([name, glyph]) => (
        <button key={name} aria-label={name} className="flex h-5 w-5 items-center justify-center border border-[#a6a6a6]">
          <Ico>{glyph}</Ico>
        </button>
      ))}
    </div>
    <div className="flex min-h-0 flex-1 justify-between">
      <div className="ml-[10px] w-[241px] overflow-hidden pt-[15px]">
        <textarea aria-label="历史记录" className="block h-20 w-full resize-none border border-[#666666] bg-transparent outline-none" />
        <input aria-label="表达式" className="mb-[10px] mt-[5px] block h-5 w-full border border-[#666666] bg-transparent outline-none" />
        <KeyPad title="数字键区" keys={numberKeys} />
        <div className="h-[17px]" />
        <KeyPad title="科学" keys={scienceKeys} />
        <h3 className="mt-[17px] h-5 pl-0.5 text-[15px] font-bold leading-[18px] text-white">变量<span className="font-normal">&lt;&lt;</span></h3>
        <div className="ml-[10px] flex h-5 items-center gap-[5px] font-['Liberation_Serif',serif] text-lg italic leading-4">
          <button aria-label="新建变量" className="flex h-5 w-5 items-center justify-center border border-[#a6a6a6] pb-0.5 text-[#5cb8ff]">x<sup className="text-[11px] font-bold not-italic text-[#ffc04a]">+</sup></button>
          <button aria-label="编辑变量" className="flex h-5 w-5 items-center justify-center pb-0.5 text-[#5cb8ff]">x<sup className="text-[11px] font-bold not-italic text-[#ffc04a]">+</sup></button>
          <button aria-label="删除变量" className="flex h-5 w-5 items-center justify-center pb-0.5 text-[#a8adb4]">x<sub className="text-[10px] not-italic">×</sub></button>
          <button aria-label="计算器" className="flex h-5 w-5 items-center justify-center">
            <Ico size={12}><Box x={1} y={0} w={14} h={16} /><Box x={3} y={2} w={10} h={3} f="#8d9299" />{[7, 10, 13].map(y => [3, 7, 11].map(x => <Box key={`${x}-${y}`} x={x} y={y} w={2} h={2} f="#434c57" />))}</Ico>
          </button>
        </div>
        <div className="flex h-[140px] border border-[#666666] text-xs text-[#f0f1f3]">
          <ul className="flex-1 overflow-hidden">
            <li className="flex h-5 items-center pl-[7px]">
              <svg width="9" height="9" viewBox="0 0 9 9" aria-hidden="true"><path d="M0 0h9v9H0z" fill="#e8eaec" /><path d="M2 4.500h5" stroke="#2b4a8a" /></svg>
              <span className="w-[6px] border-t border-dotted border-[#727a84]" />
              <Ico><path d="M0 1h6l1 2h7v10H0z" fill="#f9bd72" stroke="none" /><path d="M6 15l8-8M7 7c3-1 4 8 8 7" stroke={BLUE} strokeWidth="1.300" /></Ico>
              <span className="ml-[5px]">变量样例</span>
            </li>
            {['Phi', 'dee', 'ille', 'mee', 'nee', 'rad'].map(v => (
              <li key={v} className="ml-[30px] flex h-5 items-center border-l border-dotted border-[#656d77]">
                <span className="mr-[3px] w-[10px] border-t border-dotted border-[#656d77]" />
                <TreeGlyph ch={v === 'Phi' ? 'k' : 'x'} />
                {v}
              </li>
            ))}
          </ul>
          <div className="flex w-4 flex-col items-center bg-[#3b3d45] pb-[6px] pt-2">
            <Chevron />
            <div className="mt-[5px] h-[68px] w-[15px] bg-[#505b66]" />
            <span className="mt-auto flex"><Chevron down /></span>
          </div>
        </div>
        <p className="h-5 pl-0.5 text-xs leading-[18px] text-[#f0f1f3]">详细信息</p>
        <div className="mx-0.5 h-20 border border-[#666666]" />
        <h3 className="mt-[30px] h-5 pl-0.5 text-[15px] font-bold leading-[18px] text-white">单位转换<span className="font-normal">&lt;&lt;</span></h3>
        <table className="ml-[5px] w-[231px] table-fixed border-collapse border-r border-[#525e6a] text-xs text-[#f0f1f3]">
          <tbody>
            {units.map(([label, value]) => (
              <tr key={label} className="h-[21px] border-b border-[#525e6a]">
                <th scope="row" className="w-[100px] border-r border-[#525e6a] p-0 text-left font-normal leading-4">
                  <span className="flex items-center gap-0.5 pl-[3px]"><Ico>{pickIcon}</Ico>{label}</span>
                </th>
                <td className="p-0 pl-[5px] leading-4">{value}</td>
              </tr>
            ))}
          </tbody>
        </table>
      </div>
      <div className="mr-[5px] flex w-[15px] flex-col items-center bg-[#3b3d45] pb-2 pt-2">
        <Chevron />
        <div className="mt-[5px] h-[153px] w-[13px] bg-[#505b66]" />
        <span className="mt-auto flex"><Chevron down /></span>
      </div>
    </div>
  </aside>
);

const StatusBar = () => (
  <footer className="flex h-[26px] shrink-0 items-center bg-[#333a44] pr-[3px]">
    <div className="ml-[10px] mr-1 flex h-[22px] w-[249px] items-center border-b border-[#4d535d] pl-px font-['Liberation_Mono',monospace] text-[10px] text-white">1288.0103, 146.6302, 0.0000</div>
    <div className="flex gap-1">
      {statusTools.map(([name, on, glyph]) => (
        <button key={name} aria-label={name} aria-pressed={on} className={`flex h-5 w-5 items-center justify-center ${on ? 'border border-[#5cb2f5] bg-[#546a83]' : ''}`}>
          <Ico>{glyph}</Ico>
        </button>
      ))}
    </div>
    <div className="ml-auto flex items-center text-xs text-[#a3a8b0]">
      <Ico>
        <path d="M0 1.500h16M0.500 0v16M0 14.500h16M15.500 0v16" stroke={BLUE} />
        <text x="8" y="12" textAnchor="middle" fontSize="9" fill={BLUE} stroke="none" fontFamily="Liberation Sans">0.0</text>
      </Ico>
      <button className="ml-[3px] mr-[9px] flex items-center gap-[5px]">毫米<Caret /></button>
      <Ico>{scaleMark}</Ico>
      <button className="ml-[3px] mr-1 flex items-center gap-[6px] font-['Liberation_Mono',monospace] text-[10px]">1:1<Caret /></button>
      {statusRight.map(([name, glyph]) => (
        <button key={name} aria-label={name} className="flex h-6 w-[22px] items-center justify-center"><Ico>{glyph}</Ico></button>
      ))}
    </div>
  </footer>
);

export default function App() {
  return (
    <div className="flex h-screen flex-col overflow-hidden bg-[#333a44] font-['Open_Sans','Noto_Sans_CJK_SC',sans-serif] select-none">
      <TitleBar />
      <nav className="flex h-5 shrink-0 items-center gap-[15px] border-b border-white bg-[#2f3840] pl-[7px] font-['Noto_Sans','Noto_Sans_CJK_SC',sans-serif] text-xs leading-4 text-white">
        {menus.map(m => <button key={m}>{m}</button>)}
      </nav>
      <Toolbars />
      <main className="flex min-h-0 flex-1">
        <div className="mr-1 flex min-w-0 flex-1 flex-col">
          <div className="mb-1 flex min-h-0 flex-1">
            <div className="w-[30px] shrink-0 pt-px"><SideBar items={drawIcons} /></div>
            <DrawingArea />
            <div className="w-[30px] shrink-0 pl-0.5 pt-px">
              <SideBar items={modifyIcons} />
              <SideBar items={orderIcons} />
            </div>
          </div>
          <CommandWindow />
        </div>
        <PropertiesPanel />
        <CalculatorPanel />
      </main>
      <StatusBar />
    </div>
  );
}
